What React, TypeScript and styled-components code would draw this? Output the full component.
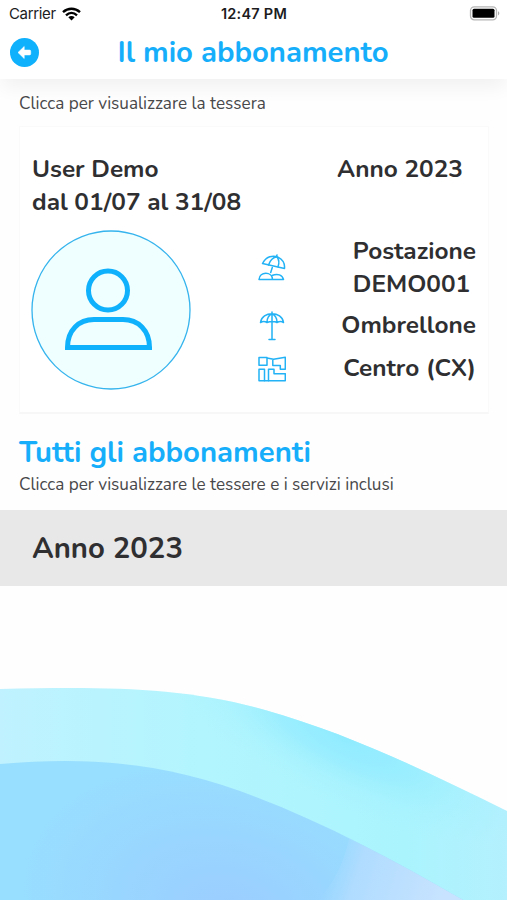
import React from "react";
import styled, { createGlobalStyle } from "styled-components";

const GlobalStyle = createGlobalStyle`
  * { box-sizing: border-box; }
  body { margin: 0; background: #fefefe; }
`;

const Screen = styled.div`
  width: 507px;
  height: 900px;
  overflow: hidden;
  display: flex;
  flex-direction: column;
  background: #fefefe;
  color: #2f2f31;
  font-family: Nunito, Lato, sans-serif;
`;

const Header = styled.header`
  height: 79px;
  flex: none;
  background: #fff;
  box-shadow: 0 10px 18px -2px rgba(0, 0, 0, 0.055);
`;

const StatusBar = styled.div`
  height: 27px;
  padding: 0 7px 0 9px;
  display: grid;
  grid-template-columns: 1fr auto 1fr;
  align-items: center;
  color: #1c1c1e;
  font: 400 15px/27px Inter, sans-serif;
`;

const Carrier = styled.div`
  display: flex;
  align-items: center;
  gap: 6px;
  letter-spacing: -0.35px;
`;

const Clock = styled.div`
  font-weight: 600;
  font-size: 14.5px;
  letter-spacing: 0.25px;
  margin-right: 1px;
`;

const BatteryIcon = styled.svg`
  justify-self: end;
`;

const NavBar = styled.div`
  height: 50px;
  padding: 0 10px;
  display: grid;
  grid-template-columns: 29px 1fr 29px;
  align-items: center;
`;

const BackButton = styled.button`
  width: 29px;
  height: 29px;
  padding: 0;
  border: 0;
  border-radius: 50%;
  background: #0fb0fc;
  display: grid;
  place-items: center;
`;

const Title = styled.h1`
  margin: 0 1px 0 0;
  text-align: center;
  color: #16aefb;
  font-size: 29.25px;
  font-weight: 700;
  line-height: 50px;
  white-space: nowrap;
`;

const Hint = styled.p`
  margin: 0 0 0 19px;
  color: #48484a;
  font-size: 17.14px;
  line-height: 24px;
  white-space: nowrap;
`;

const CardHint = styled(Hint)`
  margin-top: 13px;
`;

const Card = styled.section`
  margin: 10px 18px 0 19px;
  height: 288px;
  flex: none;
  padding: 26px 13px 0;
  background: #fff;
  border: 1px solid #fafafa;
  border-bottom: 2px solid #f7f7f7;
`;

const Text = styled.span`
  display: block;
  font-size: 24.4px;
  font-weight: 700;
  line-height: 33px;
  white-space: nowrap;
`;

const CardTop = styled.div`
  display: flex;
  justify-content: space-between;
  height: 66px;
  padding-right: 12px;
  margin-left: -1px;
`;

const CardBody = styled.div`
  display: flex;
  margin: 11px 0 0 -2px;
`;

const Avatar = styled.svg`
  flex: none;
`;

const Details = styled.div`
  flex: 1;
  margin: 5px -1px 0 67px;
  display: flex;
  flex-direction: column;
`;

const Detail = styled.div<{ $gap?: number }>`
  display: flex;
  align-items: center;
  justify-content: space-between;
  margin-top: ${(p) => p.$gap ?? 0}px;
`;

const LineIcon = styled.svg`
  flex: none;
  fill: none;
  stroke: #22b2f5;
  stroke-width: 1.5;
  stroke-linejoin: round;
  stroke-linecap: round;
`;

const SectionTitle = styled.h2`
  margin: 19px 0 0 19px;
  color: #16aefb;
  font-size: 29.3px;
  font-weight: 700;
  line-height: 39px;
  white-space: nowrap;
`;

const SectionHint = styled(Hint)`
  margin-top: 1px;
`;

const YearRow = styled.div`
  flex: none;
  height: 76px;
  margin-top: 13px;
  padding-left: 32px;
  background: #e8e8e8;
  font-size: 29.25px;
  font-weight: 700;
  line-height: 76px;
`;

const Wave = styled.svg`
  display: block;
  flex: none;
  margin-top: auto;
`;

const ParasolBeachIcon = () => (
  <LineIcon width="28" height="28" viewBox="0 0 28 28">
    <path d="M4.500 9.500C8 2.500 15 .8 20 3.200c4.500 2.300 7 6.300 6.500 11.300z" />
    <path d="M10.500 11c1.500-4.500 4.500-7.500 8-8.300M20 12.800c1.500-4 .8-7.500-1-10M18.500 2.500l.5-1.500M14.300 13.500l-1.600 5" />
    <path d="M1 25.500c.5-8 13-8.500 13.500 0zM14.500 25.500H25.500c-1-4.500-6-6.500-11.500-4" />
  </LineIcon>
);

const ParasolIcon = () => (
  <LineIcon width="28" height="30" viewBox="0 0 28 30">
    <path d="M2.500 11.500C4 -.3 24 -.3 25.500 11.500c-2-1.300-4-1.300-6.500 0-2-1.300-7-1.300-10 0-2-1.300-4.500-1.300-6.500 0zM14 1v27.500M11 28.500h6M9 11.500c0-4 2-7.500 5-8.700 3 1.200 5 4.700 5 8.700" />
  </LineIcon>
);

const MapIcon = () => (
  <LineIcon width="28" height="26" viewBox="0 0 28 26">
    <path d="M1 1.500h8v7.700H1zM9 1.900 15.500 3.200l11.800-2v12h-5V9.500h-7.500V3.200M1 13.200h5.500v11.500H1zM10.500 24.700V13.200H16v4.500h11.300v7z" />
    <path d="M6.500 24.700h4" />
  </LineIcon>
);

export default function App() {
  return (
    <Screen>
      <GlobalStyle />
      <Header>
        <StatusBar>
          <Carrier>
            Carrier
            <svg width="19" height="14" viewBox="0 0 19 14" fill="none" stroke="#000" strokeWidth="2.4">
              <path d="M1 5.200c5-4.600 12-4.600 17 0M4 8.300c3.300-3 7.700-3 11 0" />
              <path d="M9.500 13.500 6.300 10.300c1.900-1.700 4.500-1.700 6.400 0z" fill="#000" stroke="none" />
            </svg>
          </Carrier>
          <Clock>12:47 PM</Clock>
          <BatteryIcon width="31" height="15" viewBox="0 0 31 15">
            <rect x="1.500" y=".8" width="26" height="13" rx="3.800" fill="#fff" stroke="#b5b5b5" strokeWidth="1.300" />
            <rect x="3.500" y="2.800" width="22" height="9" rx="1.500" fill="#000" />
            <path d="M29 5.200c1.800.7 1.800 3.500 0 4.200z" fill="#adadad" />
          </BatteryIcon>
        </StatusBar>
        <NavBar>
          <BackButton aria-label="Indietro">
            <svg width="15" height="15" viewBox="0 0 15 15">
              <path d="M1 7.500 7.200 1.500v3.600H12.500q1.200 0 1.200 1.200v2.400q0 1.200-1.200 1.200H7.200v3.600z" fill="#fff" stroke="#fff" strokeWidth=".6" strokeLinejoin="round" />
            </svg>
          </BackButton>
          <Title>Il mio abbonamento</Title>
        </NavBar>
      </Header>

      <CardHint>Clicca per visualizzare la tessera</CardHint>
      <Card>
        <CardTop>
          <div>
            <Text>User Demo</Text>
            <Text>dal 01/07 al 31/08</Text>
          </div>
          <Text>Anno 2023</Text>
        </CardTop>
        <CardBody>
          <Avatar width="160" height="160" viewBox="0 0 160 160">
            <circle cx="80" cy="80" r="79" fill="#effeff" stroke="#35b4ed" strokeWidth="1.300" />
            <g fill="none" stroke="#0fb0fc" strokeWidth="5">
              <circle cx="77" cy="60.500" r="19.500" />
              <path d="M36.500 117.500C36.500 100 48 89.500 63 89.500h29c15 0 26.500 10.500 26.500 28z" />
            </g>
          </Avatar>
          <Details>
            <Detail>
              <ParasolBeachIcon />
              <div>
                <Text>Postazione</Text>
                <Text>DEMO001</Text>
              </div>
            </Detail>
            <Detail $gap={8}>
              <ParasolIcon />
              <Text>Ombrellone</Text>
            </Detail>
            <Detail $gap={10}>
              <MapIcon />
              <Text>Centro (CX)</Text>
            </Detail>
          </Details>
        </CardBody>
      </Card>

      <SectionTitle>Tutti gli abbonamenti</SectionTitle>
      <SectionHint>Clicca per visualizzare le tessere e i servizi inclusi</SectionHint>
      <YearRow>Anno 2023</YearRow>

      <Wave width="507" height="220" viewBox="0 680 507 220">
        <defs>
          <linearGradient id="band" x1="0" x2="1">
            <stop offset="0" stopColor="#bff2fe" />
            <stop offset=".4" stopColor="#b2f5fe" />
            <stop offset=".8" stopColor="#aaf4fe" />
            <stop offset="1" stopColor="#b4f0fe" />
          </linearGradient>
          <radialGradient id="glow" gradientUnits="userSpaceOnUse" cx="0" cy="0" r="1" gradientTransform="translate(345 738) rotate(26) scale(200 66)">
            <stop offset="0" stopColor="#90ebff" />
            <stop offset=".35" stopColor="#95ecff" stopOpacity=".8" />
            <stop offset=".65" stopColor="#9feffe" stopOpacity=".35" />
            <stop offset="1" stopColor="#a8f2fe" stopOpacity="0" />
          </radialGradient>
          <radialGradient id="inner" gradientUnits="userSpaceOnUse" cx="0" cy="0" r="1" gradientTransform="translate(230 915) rotate(15) scale(210 145)">
            <stop offset="0" stopColor="#9bcdff" />
            <stop offset=".5" stopColor="#99d5ff" />
            <stop offset="1" stopColor="#98deff" />
          </radialGradient>
          <linearGradient id="corner" gradientUnits="userSpaceOnUse" x1="328" y1="870" x2="440" y2="905">
            <stop offset="0" stopColor="#a8dcff" stopOpacity="0" />
            <stop offset=".25" stopColor="#b0dcff" />
            <stop offset="1" stopColor="#c7e3ff" />
          </linearGradient>
          <clipPath id="innerClip">
            <path d="M0 764C90 756 160 763 240 791C320 820 390 858 465 901H0z" />
          </clipPath>
        </defs>
        <path d="M0 689C100 687 180 686 265 710C350 734 430 773 507 811V900H0z" fill="url(#band)" />
        <path d="M0 689C100 687 180 686 265 710C350 734 430 773 507 811V900H0z" fill="url(#glow)" />
        <g clipPath="url(#innerClip)">
          <path d="M0 750H507V900H0z" fill="url(#inner)" />
          <path d="M360 830H507V900H318Q342 875 350 835z" fill="url(#corner)" />
        </g>
      </Wave>
    </Screen>
  );
}
